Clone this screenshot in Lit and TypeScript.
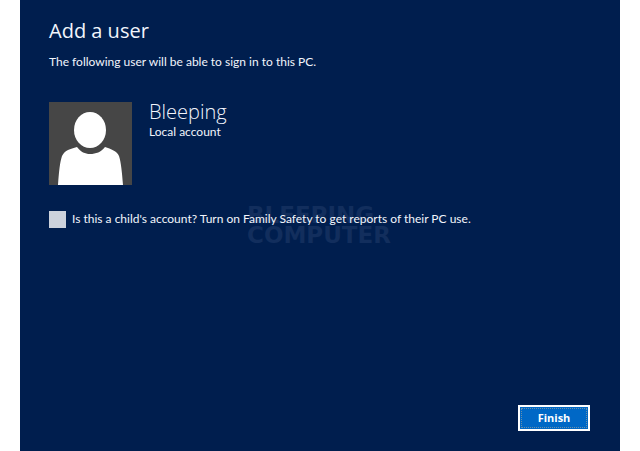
import { LitElement, html, css } from "lit";
import { customElement, property, state } from "lit/decorators.js";

@customElement("user-avatar")
class UserAvatar extends LitElement {
  static styles = css`
    :host { display: block; flex: none; width: 83px; height: 83px; background: #464646; }
    svg { display: block; width: 100%; height: 100%; }
  `;
  render() {
    return html`
      <svg viewBox="0 0 83 83" role="img" aria-label="User picture">
        <ellipse cx="41" cy="28" rx="16" ry="18" fill="#fff" />
        <path fill="#fff" d="M9 83C10 69 11 60 13 54C16 48 21 47 28 45C32 50 36 52 41 52C47 52 52 50 56 45C62 47 68 49 70 54C72 60 73 70 74 83Z" />
      </svg>`;
  }
}

@customElement("app-root")
class AppRoot extends LitElement {
  @property() userName = "Bleeping";
  @state() private child = false;

  static styles = css`
    :host {
      display: block;
      background: #fff;
      padding: 0 20px;
      font-family: Lato, "Open Sans", sans-serif;
      color: #f2f5fc;
    }
    .panel {
      box-sizing: border-box;
      display: flex;
      flex-direction: column;
      min-height: 100vh;
      padding: 16px 30px 20px 29px;
      background: #001e4e;
    }
    h1, h2, p { margin: 0; font-weight: 400; }
    h1, h2 { font-family: "Open Sans", "Noto Sans", sans-serif; }
    h1 { font-size: 20px; line-height: 30px; }
    .lead { margin-top: 7px; font-size: 12px; line-height: 18px; }
    .user { display: flex; gap: 17px; margin-top: 31px; }
    h2 { font-size: 20px; line-height: 20px; font-weight: 300; }
    .kind { font-size: 12px; line-height: 20px; }
    .option { position: relative; display: flex; align-items: center; margin-top: 24px; gap: 6px; }
    .option label { position: relative; font-size: 12px; line-height: 20px; }
    input {
      appearance: none;
      flex: none;
      width: 17px;
      height: 17px;
      margin: 0;
      background: #ccd2dc;
    }
    input:checked { background: #ccd2dc linear-gradient(#001e4e, #001e4e) center / 9px 9px no-repeat; }
    .watermark {
      position: absolute;
      top: -4px;
      left: 198px;
      font: 700 23px/20px "DejaVu Sans", sans-serif;
      color: #122e5d;
      pointer-events: none;
    }
    .watermark span { display: block; }
    .actions { display: flex; justify-content: flex-end; margin-top: auto; }
    button {
      width: 72px;
      height: 26px;
      padding: 0;
      border: 2px solid #fff;
      background: #0068c6;
      color: #fff;
      font: 700 11px/16px "Open Sans", "Noto Sans", sans-serif;
      outline: 1px dotted #6c90a8;
      outline-offset: -4px;
    }
  `;

  render() {
    return html`
      <main class="panel">
        <h1>Add a user</h1>
        <p class="lead">The following user will be able to sign in to this PC.</p>
        <section class="user">
          <user-avatar></user-avatar>
          <div>
            <h2>${this.userName}</h2>
            <p class="kind">Local account</p>
          </div>
        </section>
        <div class="option">
          <div class="watermark" aria-hidden="true"><span>BLEEPING</span><span>COMPUTER</span></div>
          <input id="child" type="checkbox" .checked=${this.child}
            @change=${(e: Event) => (this.child = (e.target as HTMLInputElement).checked)} />
          <label for="child">Is this a child's account? Turn on Family Safety to get reports of their PC use.</label>
        </div>
        <div class="actions"><button type="button">Finish</button></div>
      </main>`;
  }
}
